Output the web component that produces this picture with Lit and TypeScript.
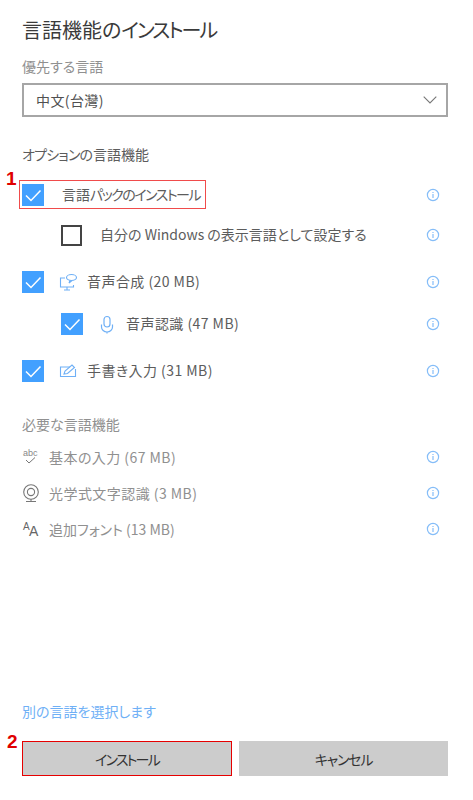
import { LitElement, html, css, svg } from "lit";
import { customElement } from "lit/decorators.js";

const info = html`<svg class="info" viewBox="0 0 14 14" width="14" height="14"><circle cx="7" cy="7" r="5.6" fill="none" stroke="#85bdf8" stroke-width="1.2"/><path d="M7 6v4M7 4v1" stroke="#85bdf8" stroke-width="1.2" fill="none"/></svg>`;

const tick = html`<svg class="tick" viewBox="0 0 22 22" width="22" height="22"><path d="M4 11.5l5 5L18.5 6.5" fill="none" stroke="#fff" stroke-width="1.5"/></svg>`;

const speech = svg`<g fill="none" stroke="#6fb0f6" stroke-width="1.1"><path d="M6 5H1.5v9h13v-2"/><ellipse cx="12.5" cy="4.5" rx="5" ry="3"/><path d="M11 7.5l-1 2.5 3-2.5"/><path d="M8 14v2.5M5 17h6"/></g>`;
const mic = svg`<g fill="none" stroke="#6fb0f6" stroke-width="1.2"><rect x="6" y="1.5" width="6" height="10.5" rx="3"/><path d="M3.5 9.5v2.5a5.5 5 0 0 0 11 0V9.5M9 17v1.5"/></g>`;
const pen = svg`<g fill="none" stroke="#6fb0f6" stroke-width="1.1"><path d="M11 5H1.5v9.5h15V7"/><path d="M5 12l1-3 7-6 2.5 2.5-7 6z"/></g>`;
const abc = svg`<text x="1" y="7.5" font-family="'Liberation Sans',sans-serif" font-size="9" fill="#888">abc</text><path d="M4 12l3 3 6-5.5" fill="none" stroke="#777" stroke-width="1"/>`;
const cam = svg`<g fill="none" stroke="#777" stroke-width="1.1"><circle cx="9" cy="8" r="7.3"/><circle cx="9" cy="8" r="3.6"/><path d="M9 15v2M4 17.5h10"/></g>`;
const aa = svg`<text x="1" y="10" font-family="'Liberation Sans',sans-serif" font-size="10" fill="#666">A</text><text x="7" y="15.5" font-family="'Liberation Sans',sans-serif" font-size="14" fill="#666">A</text>`;

@customElement("app-root")
export class AppRoot extends LitElement {
  static styles = css`
    :host {
      display: block;
      position: relative;
      width: 473px;
      height: 800px;
      background: #fff;
      color: #333;
      font-family: "Noto Sans CJK JP", "Noto Sans", sans-serif;
      font-size: 14px;
      font-feature-settings: "palt";
      overflow: hidden;
    }
    .page {
      display: flex;
      flex-direction: column;
      height: 800px;
      box-sizing: border-box;
      padding: 0 25px 24px 22px;
    }
    h1 {
      margin: 0;
      height: 59px;
      line-height: 60px;
      font-size: 20px;
      font-weight: 400;
      color: #3a3a3a;
    }
    .k1 { letter-spacing: -2px; }
    .k2 { letter-spacing: -1.5px; }
    .k3 { letter-spacing: -0.8px; }
    .label {
      height: 25px;
      line-height: 14px;
      color: #909090;
    }
    .select {
      box-sizing: border-box;
      height: 34px;
      margin-top: -1px;
      border: 2px solid #a6a6a6;
      display: flex;
      align-items: center;
      justify-content: space-between;
      padding: 0 9px 0 12px;
      color: #505050;
      letter-spacing: 0.4px;
    }
    .section {
      height: 20px;
      line-height: 20px;
      margin-top: 27px;
      color: #5c5c5c;
    }
    .section.req {
      margin-top: 32px;
      color: #909090;
    }
    .options {
      margin-top: 20px;
      display: flex;
      flex-direction: column;
    }
    .row {
      display: flex;
      align-items: center;
      height: 22px;
      color: #5c5c5c;
    }
    .row > span { padding-bottom: 2px; }
    .required .row > span { padding-bottom: 0; }
    .sz { letter-spacing: 0.45px; }
    .r2 { margin-top: 18px; }
    .r3 { margin-top: 25px; }
    .r4 { margin-top: 20px; }
    .r5 { margin-top: 25px; }
    .indent { padding-left: 39px; }
    .box {
      box-sizing: border-box;
      width: 22px;
      height: 22px;
      flex: none;
      background: #42a0ff;
    }
    .box.off {
      background: #fff;
      border: 2px solid #444;
      width: 21px;
      height: 21px;
    }
    .tick { display: block; }
    .opt-icon { flex: none; margin-left: 15px; margin-right: 9px; }
    .text-first { margin-left: 18px; }
    .info { flex: none; margin-left: auto; margin-right: 8px; }
    .required {
      margin-top: 13px;
      display: flex;
      flex-direction: column;
      gap: 16px;
    }
    .required .row { height: 20px; color: #909090; }
    .req-icon { flex: none; width: 18px; margin-right: 9px; }
    .spacer { flex: 1; }
    .link {
      color: #6fb0f6;
      height: 20px;
      line-height: 18px;
    }
    .buttons {
      margin-top: 19px;
      display: flex;
      gap: 7px;
    }
    .btn {
      box-sizing: border-box;
      width: 209px;
      height: 35px;
      background: #ccc;
      display: flex;
      align-items: center;
      justify-content: center;
      color: #333;
    }
    .btn.primary { width: 210px; border: 1px solid #e60000; letter-spacing: -1.8px; }
    .btn.second { letter-spacing: -1.2px; }
    .mark {
      position: absolute;
      border: 1px solid #f04b4b;
      box-sizing: border-box;
      left: 19px;
      top: 180px;
      width: 187px;
      height: 29px;
    }
    .num {
      position: absolute;
      color: #e00000;
      font: 700 19px "Liberation Sans", sans-serif;
      line-height: 20px;
    }
    .n1 { left: 6px; top: 169px; }
    .n2 { left: 7px; top: 732px; }
  `;

  render() {
    return html`
      <div class="page">
        <h1>言語機能の<span class="k1">インストール</span></h1>
        <div class="label">優先する言語</div>
        <div class="select">
          <span>中文(台灣)</span>
          <svg width="14" height="8" viewBox="0 0 14 8"><path d="M.7.7L7 7l6.3-6.3" fill="none" stroke="#777" stroke-width="1.1"/></svg>
        </div>
        <div class="section"><span class="k3">オプション</span>の言語機能</div>
        <div class="options">
          <div class="row"><div class="box">${tick}</div><span class="text-first">言語<span class="k2">パックのインストール</span></span>${info}</div>
          <div class="row r2 indent"><div class="box off"></div><span class="text-first">自分の Windows の表示言語として設定する</span>${info}</div>
          <div class="row r3"><div class="box">${tick}</div><svg class="opt-icon" width="19" height="19" viewBox="0 0 19 19">${speech}</svg><span class="sz">音声合成 (20 MB)</span>${info}</div>
          <div class="row r4 indent"><div class="box">${tick}</div><svg class="opt-icon" width="19" height="19" viewBox="0 0 19 19">${mic}</svg><span class="sz">音声認識 (47 MB)</span>${info}</div>
          <div class="row r5"><div class="box">${tick}</div><svg class="opt-icon" width="19" height="19" viewBox="0 0 19 19">${pen}</svg><span class="sz">手書き入力 (31 MB)</span>${info}</div>
        </div>
        <div class="section req">必要な言語機能</div>
        <div class="required">
          <div class="row"><svg class="req-icon" height="18" viewBox="0 0 18 18">${abc}</svg><span class="sz">基本の入力 (67 MB)</span>${info}</div>
          <div class="row"><svg class="req-icon" height="18" viewBox="0 0 18 18">${cam}</svg><span class="sz">光学式文字認識 (3 MB)</span>${info}</div>
          <div class="row"><svg class="req-icon" height="18" viewBox="0 0 18 18">${aa}</svg><span>追加フォント (13 MB)</span>${info}</div>
        </div>
        <div class="spacer"></div>
        <div class="link">別の言語を選択します</div>
        <div class="buttons">
          <div class="btn primary">インストール</div>
          <div class="btn second">キャンセル</div>
        </div>
      </div>
      <div class="mark"></div>
      <div class="num n1">1</div>
      <div class="num n2">2</div>
    `;
  }
}
